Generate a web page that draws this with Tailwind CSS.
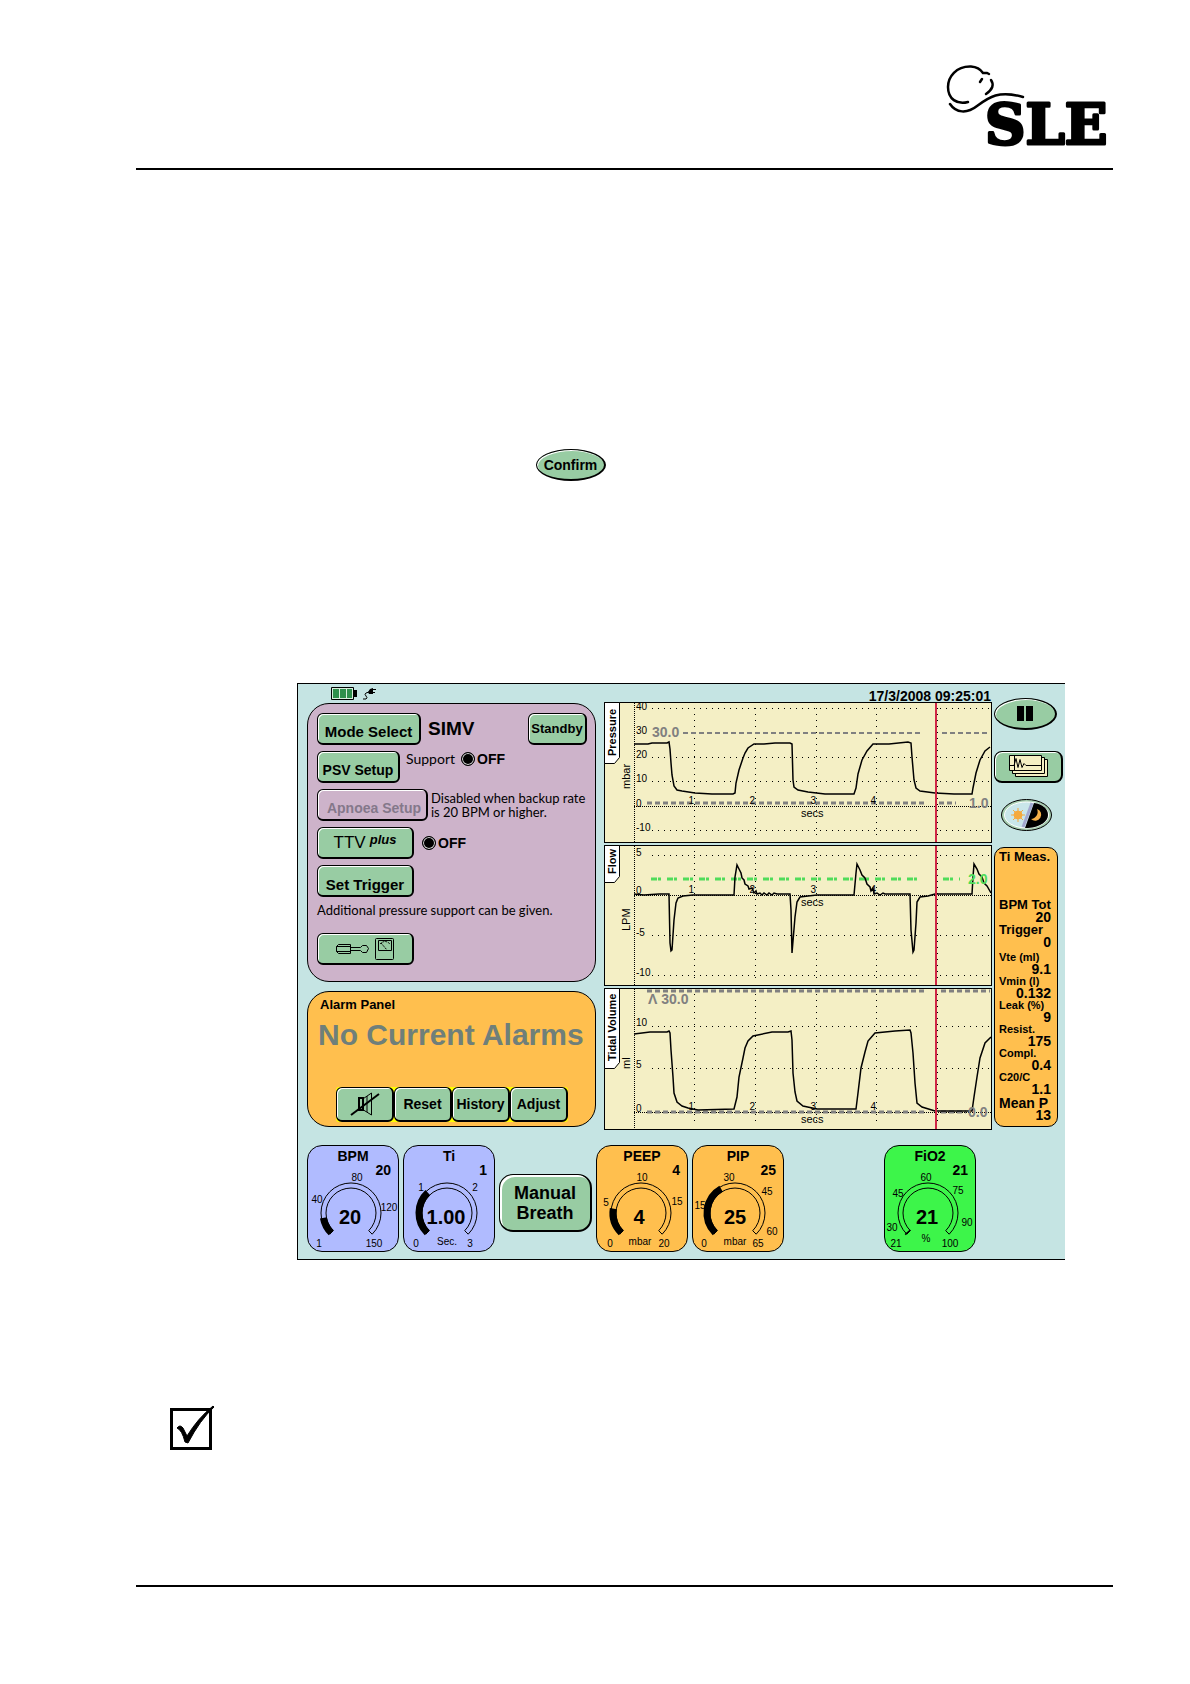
<!DOCTYPE html>
<html lang="en">
<head>
  <meta charset="UTF-8" />
  <meta name="viewport" content="width=device-width, initial-scale=1" />
  <title>SLE Ventilator - SIMV</title>
  <script src="https://cdn.jsdelivr.net/npm/@tailwindcss/browser@4"></script>
</head>
<body class="min-h-screen bg-white text-black font-['Liberation_Sans',Arial,sans-serif] flex flex-col pl-[136px] pr-[77px]">

  <header class="flex justify-end pt-[65px] pb-[20px] border-b-2 border-black">
    <svg class="w-[166px] h-[83px] overflow-visible" viewBox="0 0 166 83" role="img" aria-label="SLE">
      <g fill="none" stroke="#000" stroke-width="2.500" stroke-linecap="round">
        <path d="M42 9 40 8H36Q32 2 24 1.500C9 1 1 12 1 22C1 34 10 40 21 37" />
        <path d="M44 15Q49 22 39 29M35 14 33 17" />
        <path d="M3 39C9 48 20 49 30 41C42 32 52 25 76 32" />
      </g>
      <text x="38" y="79" font-size="56" font-weight="bold" stroke="#000" stroke-width="3" stroke-linejoin="round" class="font-['DejaVu_Serif',serif]">SLE</text>
    </svg>
  </header>

  <main class="flex-1">
    <div class="pt-[279px] pl-[400px]">
      <button class="w-[70px] h-8 rounded-[50%] border border-black border-r-2 border-b-2 bg-[#98cca3] text-sm font-bold shadow-[inset_1px_1px_0_#fff]">Confirm</button>
    </div>

    <!-- Ventilator screen -->
    <section class="mt-[202px] ml-[161px] mr-12 border-t border-l border-b border-black bg-[#c5e4e3]">
      <div class="flex">

        <!-- Left: mode and alarm panels -->
        <div class="w-[298px] shrink-0 pl-[9px]">
          <div class="h-[19px] pl-6 pt-[3px] flex gap-[5px]">
            <svg class="w-[26px] h-[13px]" viewBox="0 0 26 13">
              <path d="M.5.5h22v12H.5z" fill="#d8eedd" stroke="#000" />
              <path d="M2 2h6v9H2zM9 2h6v9H9zM16 2h5v9h-5z" fill="#2f8f4c" />
              <path d="M23 3h3v7h-3z" />
            </svg>
            <svg class="w-[14px] h-[13px]" viewBox="0 0 14 13">
              <path d="M1 12h3q2-1 0-3t0-3l3-1" fill="none" stroke="#000" />
              <path d="M6 5l2-3 3-1v1h3v1h-3v2h2v1h-2v1L7 7z" />
            </svg>
          </div>

          <section class="h-[279px] rounded-[22px] border border-black bg-[#cdb3ca] pl-[9px] pr-2 pt-[9px]">
            <div class="flex flex-col gap-[6px]">
              <div class="flex items-center h-8">
                <button class="w-[104px] h-8 pt-1.5 rounded-md border border-black border-r-2 border-b-2 bg-[#98cca3] text-[15px] leading-5 font-bold shadow-[inset_1px_1px_0_#fff]">Mode Select</button>
                <h1 class="ml-[7px] text-[19px] font-bold">SIMV</h1>
                <button class="ml-auto w-[59px] h-8 rounded-md border border-black border-r-2 border-b-2 bg-[#98cca3] text-[13px] font-bold shadow-[inset_1px_1px_0_#fff]">Standby</button>
              </div>
              <div class="flex items-start h-8">
                <button class="w-[83px] h-8 pt-1.5 rounded-md border border-black border-r-2 border-b-2 bg-[#98cca3] text-sm font-bold shadow-[inset_1px_1px_0_#fff]">PSV Setup</button>
                <span class="ml-[6px] w-[55px] text-sm leading-4 font-['Lato',sans-serif]">Support</span>
                <label class="flex items-center gap-[2px] text-sm leading-4 font-bold">
                  <input type="radio" name="support" checked class="appearance-none size-[14px] rounded-full border border-black bg-black shadow-[inset_0_0_0_1px_#ddd]" />OFF
                </label>
              </div>
              <div class="flex items-center h-8">
                <button disabled class="w-[111px] h-8 pt-1.5 pl-1 rounded-md border border-black border-r-2 border-b-2 bg-[#cdb3ca] text-[#84788a] text-sm font-bold shadow-[inset_1px_1px_0_#fff]">Apnoea Setup</button>
                <p class="ml-[3px] text-[13px] leading-[14px] whitespace-nowrap font-['Lato',sans-serif]">Disabled when backup rate<br />is 20 BPM or higher.</p>
              </div>
              <div class="flex items-center h-8">
                <button class="w-[97px] h-8 flex items-center justify-center gap-1 rounded-md border border-black border-r-2 border-b-2 bg-[#98cca3] text-[17px] shadow-[inset_1px_1px_0_#fff]">TTV <span class="pb-1.5 text-[13px] leading-4 font-bold italic">plus</span></button>
                <label class="ml-2 flex items-center gap-[2px] text-sm leading-4 font-bold">
                  <input type="radio" name="ttv" checked class="appearance-none size-[14px] rounded-full border border-black bg-black shadow-[inset_0_0_0_1px_#ddd]" />OFF
                </label>
              </div>
              <button class="w-[97px] h-8 pt-2 rounded-md border border-black border-r-2 border-b-2 bg-[#98cca3] text-[15px] leading-5 font-bold shadow-[inset_1px_1px_0_#fff]">Set Trigger</button>
            </div>
            <p class="mt-[3px] text-[13px] leading-5 font-['Lato',sans-serif]">Additional pressure support can be given.</p>
            <button aria-label="Utilities" class="mt-[13px] w-[97px] h-8 flex items-center justify-center rounded-md border border-black border-r-2 border-b-2 bg-[#98cca3] shadow-[inset_1px_1px_0_#fff]">
              <svg class="w-[58px] h-[22px]" viewBox="0 0 58 22" fill="none" stroke="#000">
                <path d="M2.500 6.500h12v9h-12l-2-2v-5zM0.500 8.500h14M0.500 13.500h14M14.500 9.500h10l2-2h4l2 3-2 4h-4l-2-2h-10M39.500 1.500q0-1 1-1h16q1 0 1 1v19q0 1-1 1h-16q-1 0-1-1zM42.500 2.500h13v10h-13z" />
                <path d="M44 6q5-5 10 0M45 5l6 7" stroke-dasharray="2 1" />
              </svg>
            </button>
          </section>

          <section class="mt-[9px] h-[136px] rounded-[22px] border border-black bg-[#ffbf4e] pt-[5px]">
            <h2 class="pl-3 text-[13px] leading-4 font-bold">Alarm Panel</h2>
            <p class="pl-[10px] mt-1 text-[30px] leading-9 font-bold text-[#6f7f7a] whitespace-nowrap">No Current Alarms</p>
            <div class="mt-[34px] ml-7 w-[232px] h-[35px] grid grid-cols-4 bg-[#ffff00] rounded-[3px]">
              <button aria-label="Mute" class="flex items-center justify-center rounded-md border border-black border-r-2 border-b-2 bg-[#98cca3] shadow-[inset_1px_1px_0_#fff]">
                <svg class="w-[30px] h-6" viewBox="0 0 30 24" fill="none" stroke="#000">
                  <path d="M9 6h4v12H9z" stroke-width="2" />
                  <path d="M13.500 6.500 21.500 1v22l-8-5M17 4v16" />
                  <path d="M1 23 29 2" stroke-width="2" />
                </svg>
              </button>
              <button class="rounded-md border border-black border-r-2 border-b-2 bg-[#98cca3] text-sm font-bold shadow-[inset_1px_1px_0_#fff]">Reset</button>
              <button class="rounded-md border border-black border-r-2 border-b-2 bg-[#98cca3] text-sm font-bold shadow-[inset_1px_1px_0_#fff]">History</button>
              <button class="rounded-md border border-black border-r-2 border-b-2 bg-[#98cca3] text-sm font-bold shadow-[inset_1px_1px_0_#fff]">Adjust</button>
            </div>
          </section>
        </div>

        <!-- Middle: waveforms -->
        <div class="flex-1 min-w-0 ml-2">
          <time class="block h-[18px] pr-[1px] text-right text-sm leading-6 font-bold">17/3/2008 09:25:01</time>
          <div id="charts" class="flex flex-col gap-[2px]"></div>
        </div>

        <!-- Right: view buttons and measurements -->
        <div class="w-[73px] shrink-0 pl-[2px] pt-[14px]">
          <button aria-label="Pause" class="w-[63px] h-8 flex items-center justify-center gap-[2px] rounded-[50%] border border-black border-r-2 border-b-2 bg-[#98cca3] shadow-[inset_1px_1px_0_#fff]">
            <span class="w-[7px] h-[15px] bg-black"></span>
            <span class="w-[7px] h-[15px] bg-black"></span>
          </button>
          <button aria-label="Waves" class="mt-[21px] w-[69px] h-8 flex items-center justify-center rounded-lg border border-black border-r-2 border-b-2 bg-[#98cca3] shadow-[inset_1px_1px_0_#fff]">
            <svg class="w-[39px] h-[23px]" viewBox="0 0 39 23" fill="#f5f0c4" stroke="#000">
              <path d="M6.500 4.500h32v17h-32z" />
              <path d="M3.500 2.500h32v16h-32z" />
              <path d="M.5.500h32v15H.5z" />
              <path d="M5.500 1v14M1 10.500h4l2-7 2 9 2-8 2 8 2-4 2 2h15" fill="none" />
            </svg>
          </button>
          <button aria-label="Day or night" class="block mt-4 ml-[7px] w-[51px] h-8">
            <svg class="w-[51px] h-8" viewBox="0 0 51 32">
              <ellipse cx="25.500" cy="16" rx="25" ry="15.500" fill="#a8cfb2" stroke="#000" />
              <ellipse cx="25.500" cy="16" rx="22" ry="13" fill="#c9e6ea" stroke="#fff" />
              <path d="M33 4C42 5 47 10 47 16S40 28 27 29H24z" fill="#000" />
              <path d="M31 4 22 28" stroke="#a3a8cf" stroke-width="3" />
              <g stroke="#f5a93c" fill="#f5a93c">
                <circle cx="17" cy="16" r="4" />
                <path d="M17 9v14M10 16h14M12 11l10 10M22 11 12 21" />
              </g>
              <path d="M36 10A6 6 0 1 1 30 20A7 7 0 0 0 36 10z" fill="#f5b048" />
            </svg>
          </button>

          <dl class="mt-4 w-16 h-[280px] pt-[3px] pl-[4px] pr-[6px] rounded-[10px] border border-black bg-[#ffbf4e] font-bold whitespace-nowrap leading-[12px]">
            <dt class="h-12 text-[13px]">Ti Meas.</dt>
            <dt class="text-[13px]">BPM Tot</dt><dd class="mb-[1px] text-sm leading-[12px] text-right">20</dd>
            <dt class="text-[13px]">Trigger</dt><dd class="mb-[3px] text-sm leading-[12px] text-right">0</dd>
            <dt class="text-[11px]">Vte (ml)</dt><dd class="text-sm leading-[12px] text-right">9.1</dd>
            <dt class="text-[11px]">Vmin (l)</dt><dd class="text-sm leading-[12px] text-right">0.132</dd>
            <dt class="text-[11px]">Leak (%)</dt><dd class="text-sm leading-[12px] text-right">9</dd>
            <dt class="text-[11px]">Resist.</dt><dd class="text-sm leading-[12px] text-right">175</dd>
            <dt class="text-[11px]">Compl.</dt><dd class="text-sm leading-[12px] text-right">0.4</dd>
            <dt class="text-[11px]">C20/C</dt><dd class="text-sm leading-[12px] text-right">1.1</dd>
            <dt class="pt-[2px] text-sm leading-[12px]">Mean P</dt><dd class="text-sm leading-[12px] text-right">13</dd>
          </dl>
        </div>
      </div>

      <!-- Dials -->
      <div class="flex gap-1 pl-[9px] pt-[15px] pb-[7px]">
        <div data-dial="bpm" class="w-[92px] h-[107px] rounded-[15px] border border-black bg-[#b0bbff]"></div>
        <div data-dial="ti" class="w-[92px] h-[107px] rounded-[15px] border border-black bg-[#b0bbff]"></div>
        <button class="mt-[29px] w-[93px] h-[58px] rounded-[14px] border border-black border-r-2 border-b-2 bg-[#98cca3] text-lg leading-5 font-bold shadow-[inset_2px_2px_0_#fff]">Manual<br />Breath</button>
        <div data-dial="peep" class="w-[92px] h-[107px] rounded-[15px] border border-black bg-[#ffbf4e]"></div>
        <div data-dial="pip" class="w-[92px] h-[107px] rounded-[15px] border border-black bg-[#ffbf4e]"></div>
        <div data-dial="fio2" class="ml-24 w-[92px] h-[107px] rounded-[15px] border border-black bg-[#3df54a]"></div>
      </div>
    </section>

    <div class="relative mt-[148px] ml-[34px] size-[42px]">
      <input type="checkbox" checked aria-label="Note" class="block appearance-none size-[42px] border-[3px] border-black bg-white" />
      <svg class="absolute left-0 -top-[3px] w-[46px] h-[45px] pointer-events-none" viewBox="0 0 46 45">
        <path d="M7 23q3-4 6 0l4 8Q28 13 43 1l1 1Q30 15 18 38l-3-1Q12 25 7 23z" stroke="#000" />
      </svg>
    </div>
  </main>

  <footer class="h-[99px] border-t-2 border-black"></footer>

  <script>
    // Waveform charts
    const gray = '#808080';
    const charts = [
      {
        name: 'Pressure', unit: 'mbar', unitY: 87, tab: 62, nameY: 54, h: 141, zero: 104,
        grid: [6, 55, 79, 128],
        ticks: [['40', 8], ['30', 32], ['20', 56], ['10', 80], ['0', 105], ['-10', 129]],
        limits: [
          { y: 31, w: 2, dash: '5 3', color: gray, d: 'M79 31H319M338 31H386' },
          { y: 101, w: 3, dash: '5 3', color: gray, d: 'M43 101H322M335 101H352' }
        ],
        notes: [['30.0', 48, 35, gray], ['1.0', 365, 106, gray]],
        line: '30,42 44,42 48,41 63,41 65,40 66,47 67,61 68,73 70,84 73,88 78,89 91,91 108,92 129,92 131,91 132,81 135,68 139,56 141,51 144,46 150,42 160,42 171,41 186,41 188,42 189,78 190,85 194,88 204,90 221,92 250,92 252,86 254,72 258,58 263,49 269,42 285,42 304,40 307,41 308,55 310,78 312,86 316,89 331,91 350,92 368,92 369,86 372,71 376,58 381,49 386,45'
      },
      {
        name: 'Flow', unit: 'LPM', unitY: 86, tab: 38, nameY: 29, h: 141, zero: 50,
        grid: [10, 90, 130],
        ticks: [['5', 11], ['0', 49], ['-5', 91], ['-10', 131]],
        limits: [
          { w: 3, dash: '6 1 3 6', color: '#4fdc5a', d: 'M47 34H319M339 34H356' }
        ],
        notes: [['2.0', 364, 39, '#4fdc5a']],
        line: '30,49 40,50 55,49 65,49 66,98 67,106 68,105 70,75 72,58 74,53 79,51 89,50 130,50 131,32 133,20 134,22 137,28 138,33 140,35 141,39 144,41 145,44 148,43 150,48 152,46 153,49 156,48 158,50 160,48 163,50 165,48 168,50 170,48 173,49 186,49 187,65 188,108 191,72 193,57 196,52 204,51 213,50 250,50 252,28 253,19 256,25 258,30 261,33 263,39 266,42 267,46 269,43 270,49 273,48 276,50 279,48 281,49 290,49 306,49 307,85 309,107 310,105 312,78 313,57 316,52 324,51 331,49 368,49 369,32 370,19 373,24 375,29 378,32 380,38 383,41 387,48'
      },
      {
        name: 'Tidal Volume', unit: 'ml', unitY: 81, tab: 81, nameY: 73, h: 142, zero: 124,
        grid: [38, 80],
        ticks: [['10', 38], ['5', 80], ['0', 124]],
        limits: [
          { w: 3, dash: '5 3', color: gray, d: 'M43 3H322M337 3H386' },
          { w: 3, dash: '5 3', color: gray, d: 'M43 124H322M337 124H362' }
        ],
        notes: [['Λ 30.0', 44, 16, gray], ['0.0', 364, 129, gray]],
        line: '30,46 46,44 63,44 65,43 66,45 67,62 69,89 70,105 73,114 78,118 84,120 94,122 130,121 133,109 135,89 139,70 141,60 144,53 149,48 168,44 184,44 187,43 188,52 189,85 191,104 193,113 199,118 213,121 252,121 254,105 257,80 261,64 264,53 271,45 291,43 306,42 307,45 309,65 311,95 313,115 318,119 331,123 368,123 370,109 373,89 376,70 381,55 387,49'
      }
    ];

    document.getElementById('charts').innerHTML = charts.map(c => `
      <svg class="block w-full h-auto" viewBox="0 0 388 ${c.h}" role="img" aria-label="${c.name}">
        <rect x=".5" y=".5" width="387" height="${c.h - 1}" fill="#f4efc5" stroke="#000" />
        <g stroke="#000" stroke-dasharray="1 5" shape-rendering="crispEdges">
          ${c.grid.map(y => `<path d="M48 ${y}.5H318M336 ${y}.5H386" />`).join('')}
          ${[90, 151, 212, 272, 333].map(x => `<path d="M${x}.5 6V${c.h - 6}" />`).join('')}
        </g>
        <path d="M30.500 1V${c.h}M30 ${c.zero}.5H387" stroke="#000" stroke-dasharray="1 1" shape-rendering="crispEdges" />
        ${c.limits.map(l => `<path d="${l.d}" stroke="${l.color}" stroke-width="${l.w}" stroke-dasharray="${l.dash}" />`).join('')}
        <path d="M.5.5h15v${c.tab - 7}l-5 6H.5z" fill="#fff" stroke="#000" />
        <text transform="translate(12 ${c.nameY}) rotate(-90)" font-size="11" font-weight="bold">${c.name}</text>
        <text transform="translate(26 ${c.unitY}) rotate(-90)" font-size="11">${c.unit}</text>
        <g font-size="10">
          ${c.ticks.map(([t, y]) => `<text x="32" y="${y}">${t}</text>`).join('')}
          ${[90, 151, 212, 272].map((x, i) => `<text x="${x}" y="${c.zero - 2}" text-anchor="end">${i + 1}</text>`).join('')}
        </g>
        <text x="197" y="${c.zero + 11}" font-size="11">secs</text>
        <polyline points="${c.line}" fill="none" stroke="#000" stroke-width="1.500" />
        ${c.notes.map(([t, x, y, color]) => `<text x="${x}" y="${y}" font-size="14" font-weight="bold" fill="${color}">${t}</text>`).join('')}
        <path d="M332 1V${c.h - 1}" stroke="#cf2746" stroke-width="2" />
      </svg>`).join('');

    // Dials: scale labels are [text, centre x, baseline y]
    const dials = {
      bpm: { title: 'BPM', set: '20', value: '20', part: 0.13, cx: 44, labels: [['1', 12, 102], ['40', 10, 58], ['80', 50, 36], ['120', 82, 66], ['150', 67, 102]] },
      ti: { title: 'Ti', set: '1', value: '1.00', part: 0.34, cx: 44, labels: [['0', 13, 102], ['1', 18, 46], ['2', 72, 46], ['3', 67, 102]], unit: ['Sec.', 44, 100] },
      peep: { title: 'PEEP', set: '4', value: '4', part: 0.2, cx: 45, labels: [['0', 14, 102], ['5', 10, 61], ['10', 46, 36], ['15', 81, 60], ['20', 68, 102]], unit: ['mbar', 44, 100] },
      pip: { title: 'PIP', set: '25', value: '25', part: 0.39, cx: 43, labels: [['0', 12, 102], ['15', 8, 64], ['30', 37, 36], ['45', 75, 50], ['60', 80, 90], ['65', 66, 102]], unit: ['mbar', 43, 100] },
      fio2: { title: 'FiO2', set: '21', value: '21', part: 0.01, cx: 44, labels: [['21', 12, 102], ['30', 8, 86], ['45', 14, 52], ['60', 42, 36], ['75', 74, 49], ['90', 83, 81], ['100', 66, 102]], unit: ['%', 42, 97] }
    };

    document.querySelectorAll('[data-dial]').forEach(el => {
      const d = dials[el.dataset.dial];
      const point = (part, r) => {
        const a = (135 + 270 * part) * Math.PI / 180;
        return `${(d.cx + r * Math.cos(a)).toFixed(1)} ${(68 + r * Math.sin(a)).toFixed(1)}`;
      };
      el.innerHTML = `
        <svg class="-m-px w-[92px] h-[107px]" viewBox="0 0 92 107" text-anchor="middle">
          <path d="M${point(0, 30)}A30 30 0 1 1 ${point(1, 30)}L${point(1, 25)}A25 25 0 1 0 ${point(0, 25)}Z" fill="none" stroke="#000" />
          <path d="M${point(0, 28)}A28 28 0 0 1 ${point(d.part, 28)}" fill="none" stroke="#000" stroke-width="7" />
          <text x="46" y="16" font-size="14" font-weight="bold">${d.title}</text>
          <text x="84" y="30" font-size="14" font-weight="bold" text-anchor="end">${d.set}</text>
          <text x="43" y="79" font-size="20" font-weight="bold">${d.value}</text>
          <g font-size="10">
            ${d.labels.map(([t, x, y]) => `<text x="${x}" y="${y}">${t}</text>`).join('')}
            ${d.unit ? `<text x="${d.unit[1]}" y="${d.unit[2]}">${d.unit[0]}</text>` : ''}
          </g>
        </svg>`;
    });
  </script>
</body>
</html>
